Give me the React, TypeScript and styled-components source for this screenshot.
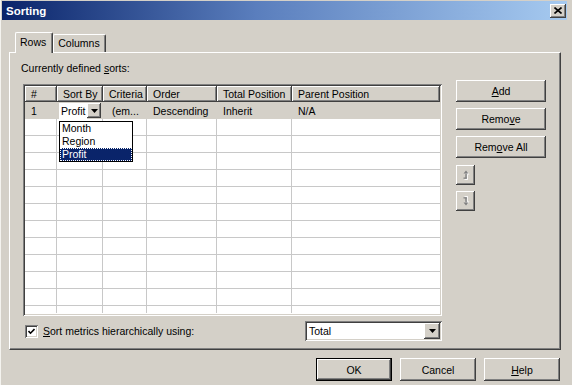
import styled, { createGlobalStyle, css } from 'styled-components';

const GlobalStyle = createGlobalStyle`
  html, body {
    margin: 0;
    padding: 0;
    background: #d4d0c8;
  }
  body {
    font-family: "Liberation Sans", Arial, sans-serif;
    font-size: 10.5px;
    color: #000;
  }
`;

const raised = css`
  background: #d4d0c8;
  box-shadow: inset -1px -1px #404040, inset 1px 1px #ffffff,
    inset -2px -2px #808080, inset 2px 2px #d4d0c8;
`;

const sunken = css`
  box-shadow: inset 1px 1px #808080, inset -1px -1px #ffffff,
    inset 2px 2px #404040, inset -2px -2px #d4d0c8;
`;

const Window = styled.div`
  width: 572px;
  height: 385px;
  box-sizing: border-box;
  padding: 1px 5px 0 2px;
  background: #d4d0c8;
  box-shadow: inset 1px 0 #f4f3ef;
  display: flex;
  flex-direction: column;
  overflow: hidden;
`;

const TitleBar = styled.div`
  height: 19px;
  display: flex;
  align-items: center;
  justify-content: space-between;
  padding: 0 1px 0 4px;
  background: linear-gradient(to right, #0a246a 0%, #5a7ebd 45%, #a6caf0 100%);
`;

const Title = styled.span`
  color: #fff;
  font-weight: bold;
  font-size: 11.5px;
`;

const CloseButton = styled.div`
  ${raised};
  width: 16px;
  height: 14px;
  display: flex;
  align-items: center;
  justify-content: center;
`;

const Content = styled.div`
  padding: 12px 6px 0 7px;
  display: flex;
  flex-direction: column;
`;

const TabStrip = styled.div`
  height: 20px;
  display: flex;
  align-items: flex-end;
  padding-left: 6px;
`;

const Tab = styled.div<{ $active?: boolean }>`
  position: relative;
  z-index: 1;
  box-sizing: border-box;
  height: ${(p) => (p.$active ? '21px' : '18px')};
  margin-bottom: ${(p) => (p.$active ? '-1px' : '0')};
  padding: ${(p) => (p.$active ? '3px 6px 0 4px' : '2px 5px 0 4px')};
  background: #d4d0c8;
  border-top: 1px solid #fff;
  border-left: 1px solid #fff;
  border-right: 1px solid #404040;
  border-radius: 2px 2px 0 0;
  box-shadow: inset -1px 0 #808080;
  line-height: 13px;
`;

const Panel = styled.div`
  height: 298px;
  box-sizing: border-box;
  border-top: 1px solid #fff;
  border-left: 1px solid #fff;
  border-right: 1px solid #404040;
  border-bottom: 1px solid #404040;
  box-shadow: inset -1px -1px #808080;
  padding: 9px 0 0 13px;
  display: flex;
  flex-direction: column;
`;

const Label = styled.div`
  line-height: 13px;
  margin-left: -2px;
`;

const MainRow = styled.div`
  display: flex;
  gap: 14px;
  margin-top: 5px;
`;

const LeftColumn = styled.div`
  width: 419px;
  display: flex;
  flex-direction: column;
  padding-top: 4px;
`;

const Table = styled.div`
  position: relative;
  height: 232px;
  box-sizing: border-box;
  padding: 2px;
  background: #fff;
  ${sunken};
`;

const columns = '32px 46px 44px 70px 75px 1fr';

const HeaderRow = styled.div`
  display: grid;
  grid-template-columns: ${columns};
  height: 16px;
`;

const HeaderCell = styled.div`
  ${raised};
  box-shadow: inset -1px -1px #404040, inset 1px 1px #ffffff,
    inset -2px -2px #808080;
  padding-left: 6px;
  line-height: 17px;
  white-space: nowrap;
  overflow: hidden;
`;

const Body = styled.div`
  height: 211px;
  overflow: hidden;
`;

const Row = styled.div<{ $filled?: boolean }>`
  display: grid;
  grid-template-columns: ${columns};
  height: 17px;
  box-sizing: border-box;
  background: ${(p) => (p.$filled ? '#d4d0c8' : '#fff')};
  border-bottom: ${(p) => (p.$filled ? 'none' : '1px solid #c8c8c8')};
`;

const Cell = styled.div<{ $lined?: boolean; $pad?: number }>`
  padding-left: ${(p) => p.$pad ?? 6}px;
  line-height: 18px;
  white-space: nowrap;
  overflow: hidden;
  border-right: ${(p) => (p.$lined ? '1px solid #c8c8c8' : 'none')};
  &:last-child {
    border-right: none;
  }
`;

const ComboCell = styled.div`
  display: flex;
  padding: 1px 2px 1px 2px;
`;

const ComboText = styled.div`
  width: 28px;
  background: #fff;
  padding-left: 2px;
  line-height: 16px;
  overflow: hidden;
  white-space: nowrap;
`;

const ArrowButton = styled.div<{ $w?: number; $h?: number }>`
  ${raised};
  width: ${(p) => p.$w ?? 14}px;
  height: ${(p) => p.$h ?? 15}px;
  display: flex;
  align-items: center;
  justify-content: center;
  flex-shrink: 0;
`;

const DropList = styled.div`
  position: absolute;
  left: 36px;
  top: 37px;
  width: 74px;
  box-sizing: border-box;
  border: 1px solid #000;
  background: #fff;
`;

const DropItem = styled.div<{ $selected?: boolean }>`
  line-height: 13px;
  padding-left: 2px;
  background: ${(p) => (p.$selected ? '#0a246a' : '#fff')};
  color: ${(p) => (p.$selected ? '#fff' : '#000')};
  outline: ${(p) => (p.$selected ? '1px dotted #fff' : 'none')};
  outline-offset: -1px;
`;

const OptionRow = styled.div`
  display: flex;
  align-items: center;
  justify-content: space-between;
  margin-top: 5px;
  padding-left: 2px;
`;

const CheckLabel = styled.label`
  display: flex;
  align-items: center;
  gap: 5px;
`;

const CheckBox = styled.div`
  width: 13px;
  height: 13px;
  box-sizing: border-box;
  background: #fff;
  ${sunken};
  display: flex;
  align-items: center;
  justify-content: center;
`;

const Select = styled.div`
  width: 137px;
  height: 20px;
  box-sizing: border-box;
  padding: 2px;
  background: #fff;
  ${sunken};
  display: flex;
  align-items: center;
  justify-content: space-between;
`;

const SelectText = styled.span`
  padding-left: 2px;
`;

const ButtonColumn = styled.div`
  display: flex;
  flex-direction: column;
  align-items: flex-start;
`;

const Button = styled.div<{ $default?: boolean; $w?: number; $h?: number; $mt?: number }>`
  ${raised};
  width: ${(p) => p.$w ?? 90}px;
  height: ${(p) => p.$h ?? 22}px;
  margin-top: ${(p) => p.$mt ?? 0}px;
  box-sizing: border-box;
  display: flex;
  align-items: center;
  justify-content: center;
  ${(p) =>
    p.$default &&
    css`
      border: 1px solid #000;
      box-shadow: inset -1px -1px #404040, inset 1px 1px #ffffff,
        inset -2px -2px #808080;
    `}
`;

const Footer = styled.div`
  display: flex;
  justify-content: flex-end;
  gap: 8px;
  margin-top: 8px;
  padding-right: 1px;
`;

const U = styled.span`
  text-decoration: underline;
`;

const Triangle = () => (
  <svg width="7" height="4" viewBox="0 0 7 4">
    <polygon points="0,0 7,0 3.5,4" fill="#000" />
  </svg>
);

const CloseIcon = () => (
  <svg width="8" height="7" viewBox="0 0 8 7">
    <path d="M0.5 0.5 L7.5 6.5 M7.5 0.5 L0.5 6.5" stroke="#000" strokeWidth="1.6" />
  </svg>
);

const Check = () => (
  <svg width="7" height="7" viewBox="0 0 7 7">
    <path d="M0.5 3 L2.5 5.2 L6.5 1" stroke="#000" strokeWidth="1.6" fill="none" />
  </svg>
);

const MoveIcon = ({ down }: { down?: boolean }) => (
  <svg width="8" height="10" viewBox="0 0 8 10" style={down ? { transform: 'scaleY(-1)' } : undefined}>
    <g fill="#ffffff" transform="translate(1 1)">
      <polygon points="4,0.5 1.5,3.5 6.5,3.5" />
      <rect x="3.3" y="3.5" width="1.5" height="5" />
      <rect x="1.5" y="7.5" width="3.3" height="1.3" />
    </g>
    <g fill="#808080">
      <polygon points="4,0.5 1.5,3.5 6.5,3.5" />
      <rect x="3.3" y="3.5" width="1.5" height="5" />
      <rect x="1.5" y="7.5" width="3.3" height="1.3" />
    </g>
  </svg>
);

const headers = ['#', 'Sort By', 'Criteria', 'Order', 'Total Position', 'Parent Position'];

export default function App() {
  return (
    <>
      <GlobalStyle />
      <Window>
        <TitleBar>
          <Title>Sorting</Title>
          <CloseButton>
            <CloseIcon />
          </CloseButton>
        </TitleBar>
        <Content>
          <TabStrip>
            <Tab $active>Rows</Tab>
            <Tab>Columns</Tab>
          </TabStrip>
          <Panel>
            <Label>
              Currently defined <U>s</U>orts:
            </Label>
            <MainRow>
              <LeftColumn>
                <Table>
                  <HeaderRow>
                    {headers.map((h) => (
                      <HeaderCell key={h}>{h}</HeaderCell>
                    ))}
                  </HeaderRow>
                  <Body>
                    <Row $filled>
                      <Cell>1</Cell>
                      <ComboCell>
                        <ComboText>Profit</ComboText>
                        <ArrowButton>
                          <Triangle />
                        </ArrowButton>
                      </ComboCell>
                      <Cell $pad={9}>(em...</Cell>
                      <Cell>Descending</Cell>
                      <Cell>Inherit</Cell>
                      <Cell>N/A</Cell>
                    </Row>
                    {Array.from({ length: 12 }).map((_, i) => (
                      <Row key={i}>
                        {headers.map((h) => (
                          <Cell key={h} $lined />
                        ))}
                      </Row>
                    ))}
                  </Body>
                  <DropList>
                    <DropItem>Month</DropItem>
                    <DropItem>Region</DropItem>
                    <DropItem $selected>Profit</DropItem>
                  </DropList>
                </Table>
                <OptionRow>
                  <CheckLabel>
                    <CheckBox>
                      <Check />
                    </CheckBox>
                    <span>
                      <U>S</U>ort metrics hierarchically using:
                    </span>
                  </CheckLabel>
                  <Select>
                    <SelectText>Total</SelectText>
                    <ArrowButton $w={16} $h={16}>
                      <Triangle />
                    </ArrowButton>
                  </Select>
                </OptionRow>
              </LeftColumn>
              <ButtonColumn>
                <Button>
                  <U>A</U>dd
                </Button>
                <Button $mt={6}>
                  Remo<U>v</U>e
                </Button>
                <Button $mt={6}>
                  Rem<U>o</U>ve All
                </Button>
                <Button $w={19} $h={20} $mt={7}>
                  <MoveIcon />
                </Button>
                <Button $w={19} $h={20} $mt={6}>
                  <MoveIcon down />
                </Button>
              </ButtonColumn>
            </MainRow>
          </Panel>
          <Footer>
            <Button $default $w={76} $h={23}>
              OK
            </Button>
            <Button $w={76} $h={23}>
              Cancel
            </Button>
            <Button $w={76} $h={23}>
              <U>H</U>elp
            </Button>
          </Footer>
        </Content>
      </Window>
    </>
  );
}
